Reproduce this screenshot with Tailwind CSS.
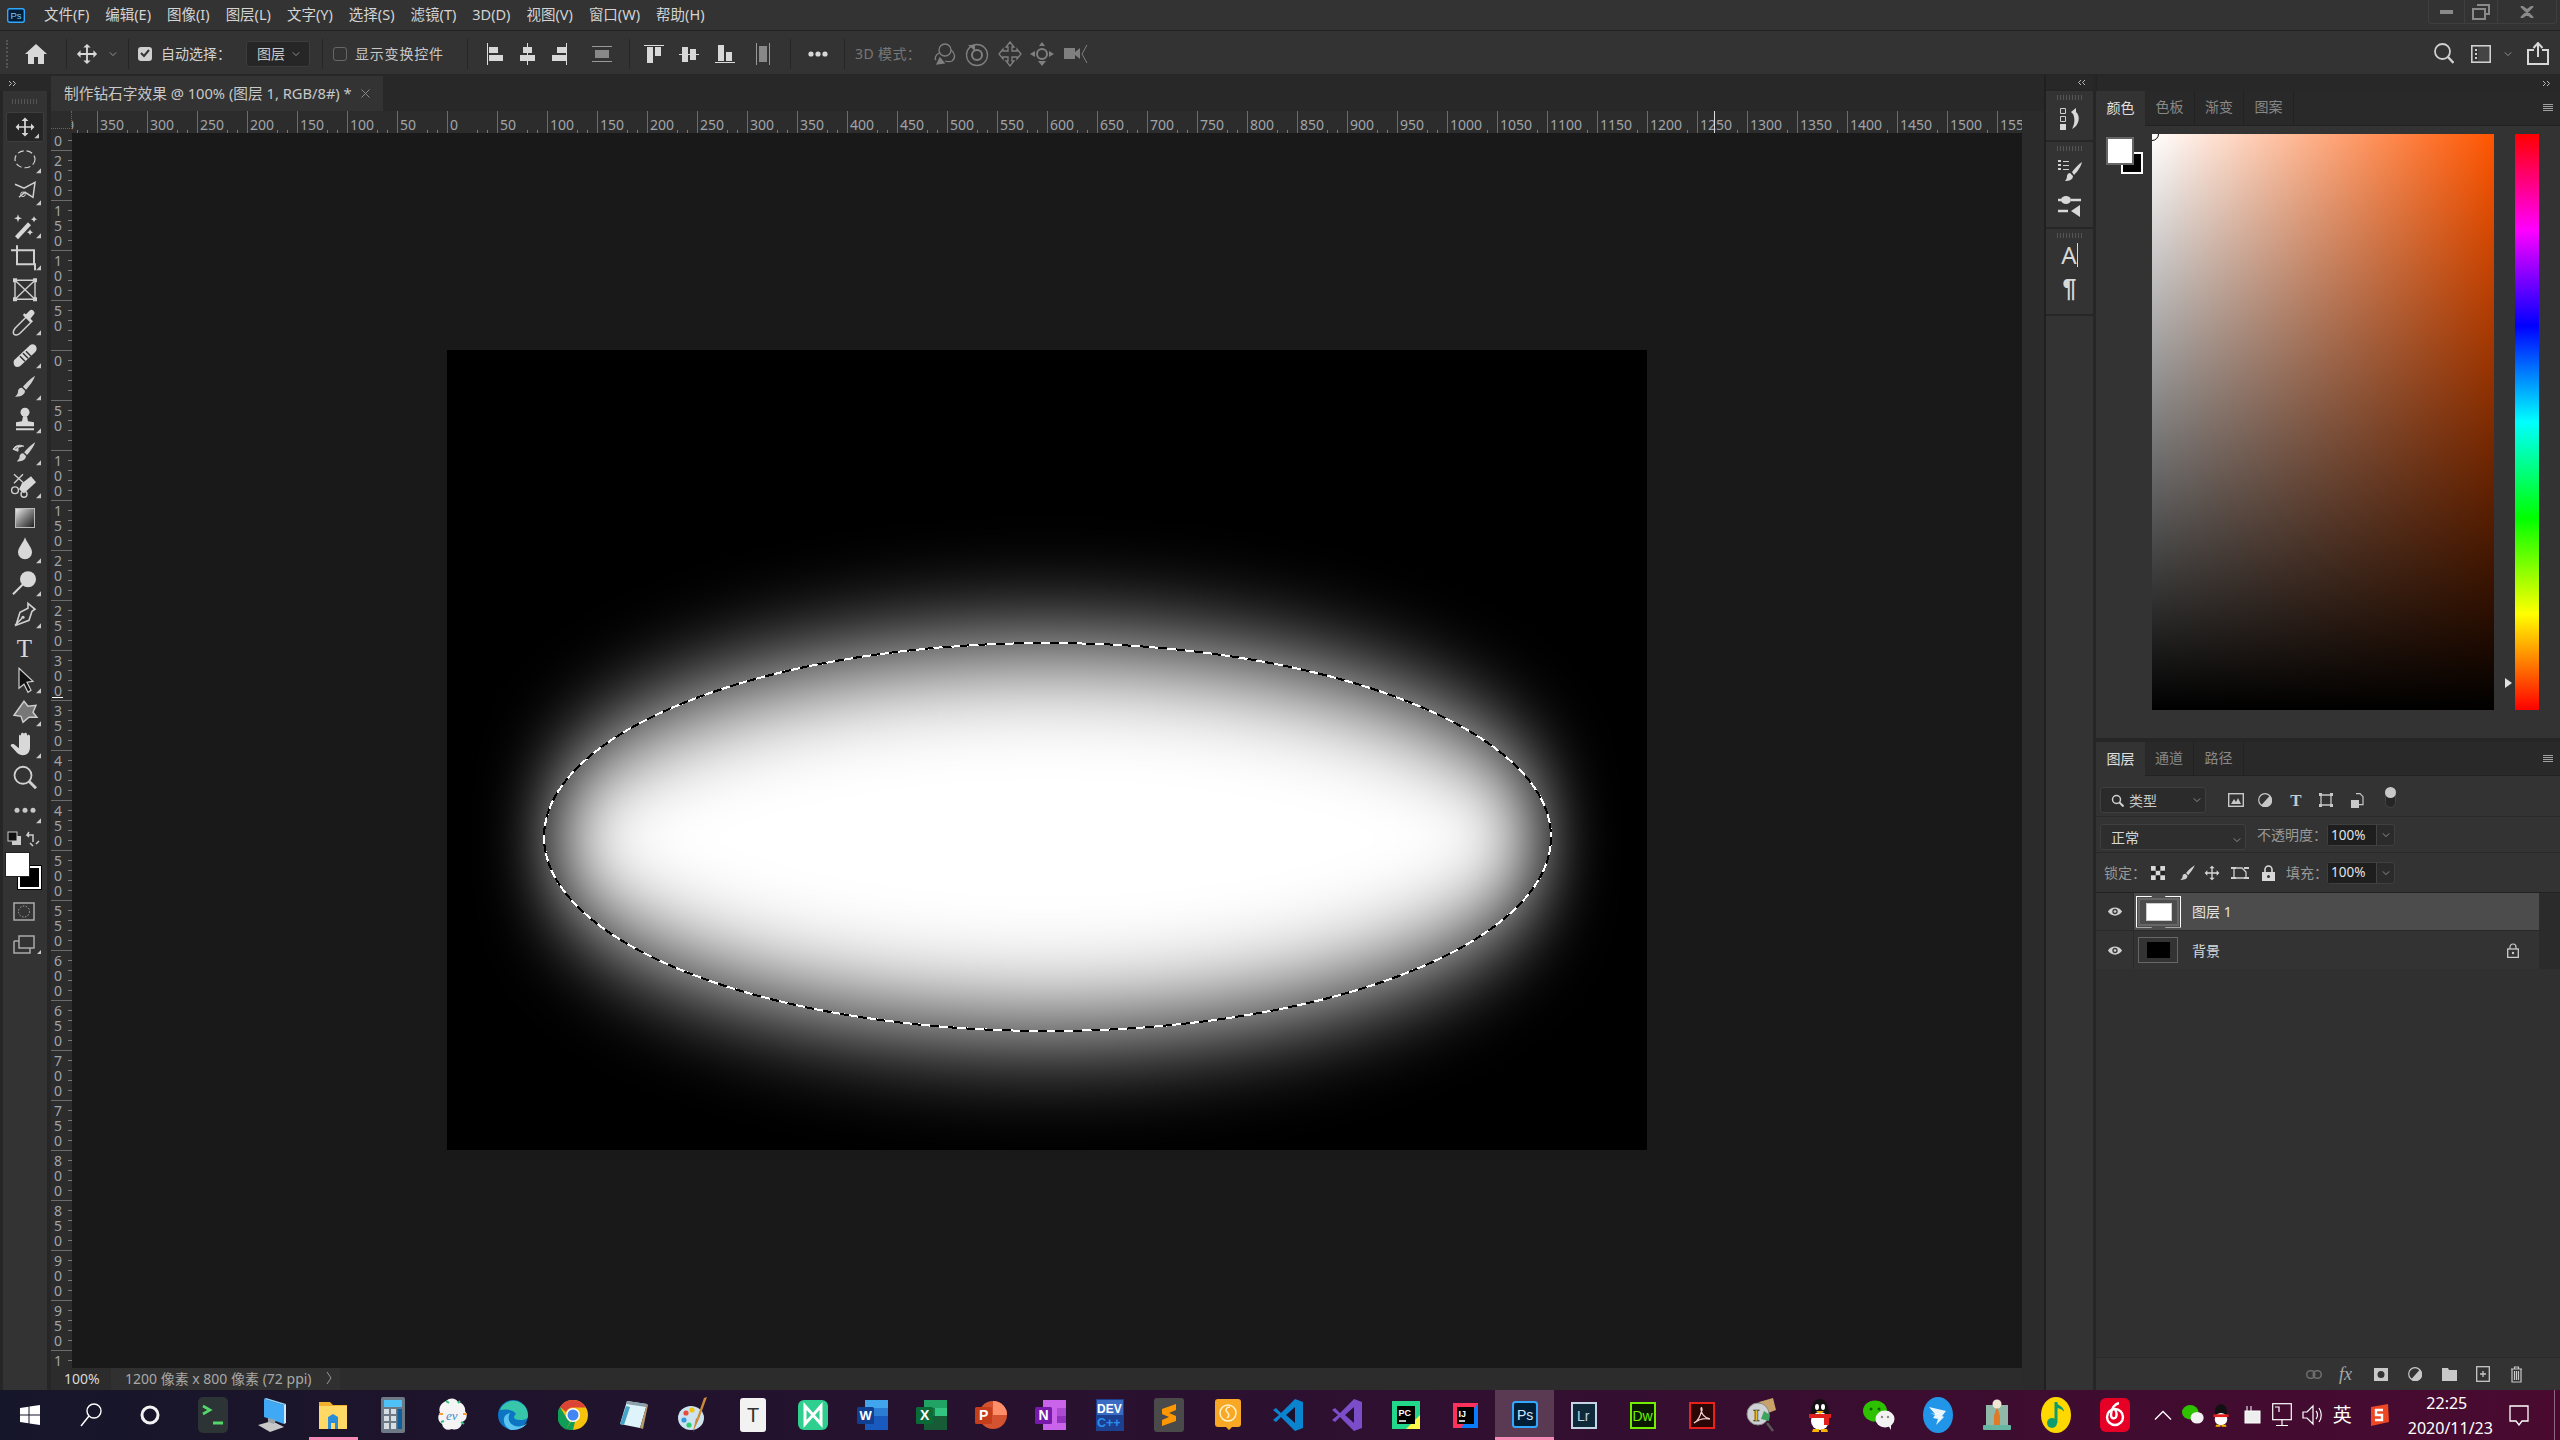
<!DOCTYPE html>
<html lang="zh">
<head>
<meta charset="UTF-8">
<title>Photoshop</title>
<script src="https://cdn.jsdelivr.net/npm/@tailwindcss/browser@4"></script>
</head>
<body class="w-[2560px] h-[1440px] overflow-hidden flex flex-col bg-[#333] text-[#d2d2d2] text-[14px] font-['Noto_Sans','Noto_Sans_CJK_SC',sans-serif]">

<svg class="hidden">
  <defs>
    <symbol id="i-move" viewBox="0 0 24 24"><path d="M12 1l4 4h-3v6h6V8l4 4-4 4v-3h-6v6h3l-4 4-4-4h3v-6H5v3l-4-4 4-4v3h6V5H8z" fill="#d8d8d8"/></symbol>
    <symbol id="i-brush" viewBox="0 0 24 24"><path d="M22 1c-3 2-9 7-12 11l3 3C16 12 21 5 22 1zM9 13c-3 0-4 2-4 4 0 2-1 3-3 5 4 0 10-1 10-6z" fill="#d0d0d0"/></symbol>
    <symbol id="i-chev" viewBox="0 0 10 6"><path d="M1 1l4 4 4-4" fill="none" stroke="#a8a8a8" stroke-width="1"/></symbol>
    <symbol id="i-eye" viewBox="0 0 20 14"><path d="M1 7c4-7 14-7 18 0-4 7-14 7-18 0z" fill="#d0d0d0"/><circle cx="10" cy="7" r="3.4" fill="#3a3a3a"/><circle cx="10" cy="7" r="1.6" fill="#d0d0d0"/></symbol>
    <symbol id="i-menu" viewBox="0 0 10 8"><path d="M0 .5h10M0 2.5h10M0 4.5h10M0 6.5h10" stroke="#a0a0a0" stroke-width="1"/></symbol>
  </defs>
</svg>

<!-- menu bar -->
<header class="h-[31px] shrink-0 flex items-start border-b border-[#222] bg-[#333]">
  <svg class="ml-[7px] mt-[8px] shrink-0" width="18" height="15" viewBox="0 0 18 15"><rect x=".7" y=".7" width="16.6" height="13.6" rx="2" fill="#001e36" stroke="#31a8ff" stroke-width="1.4"/><text x="3.5" y="11" font-size="9.5" fill="#7cc8ff" font-family="Liberation Sans">Ps</text></svg>
  <nav class="ml-[19px] h-[30px] flex items-center gap-[16px] text-[14.5px] text-[#d4d4d4]">
    <span>文件(F)</span><span>编辑(E)</span><span>图像(I)</span><span>图层(L)</span><span>文字(Y)</span><span>选择(S)</span><span>滤镜(T)</span><span>3D(D)</span><span>视图(V)</span><span>窗口(W)</span><span>帮助(H)</span>
  </nav>
  <div class="ml-auto mr-[3px] h-[24px] w-[129px] flex border-l border-b border-r border-[#3f3f3f] rounded-b-[4px]">
    <div class="w-[36px] flex items-center justify-center border-r border-[#3f3f3f]"><div class="w-[13px] h-[4px] bg-[#8a8a8a]"></div></div>
    <div class="w-[33px] flex items-center justify-center border-r border-[#3f3f3f]"><svg width="18" height="16" viewBox="0 0 18 16"><path d="M5 1h12v9h-3M1 5h12v10H1z" fill="none" stroke="#8a8a8a" stroke-width="2"/></svg></div>
    <div class="flex-1 flex items-center justify-center"><svg width="14" height="12" viewBox="0 0 14 12"><path d="M1 0l6 4.5L13 0M1 12l6-4.5 6 4.5M2 1l10 10M12 1L2 11" stroke="#8a8a8a" stroke-width="2.4" fill="none"/></svg></div>
  </div>
</header>

<!-- options bar -->
<section class="h-[44px] shrink-0 flex items-center pt-[2px] bg-[#333] border-b border-[#262626]">
  <div class="ml-[6px] w-[2px] h-[28px] border-l-2 border-dotted border-[#555]"></div>
  <svg class="ml-[17px]" width="22" height="20" viewBox="0 0 22 20"><path d="M11 0l11 10h-3v10h-6v-7H9v7H3V10H0z" fill="#d8d8d8"/></svg>
  <div class="ml-[19px] w-px h-[30px] bg-[#262626]"></div>
  <svg class="ml-[9px]" width="22" height="22"><use href="#i-move"/></svg>
  <svg class="ml-[11px]" width="8" height="6"><use href="#i-chev"/></svg>
  <div class="ml-[11px] w-px h-[30px] bg-[#262626]"></div>
  <div class="ml-[9px] w-[14px] h-[14px] rounded-[3px] bg-[#cfcfcf] flex items-center justify-center"><svg width="10" height="9" viewBox="0 0 10 9"><path d="M1 4l3 3 5-6" fill="none" stroke="#333" stroke-width="2"/></svg></div>
  <span class="ml-[9px] w-[70px] whitespace-nowrap">自动选择：</span>
  <div class="ml-[15px] w-[64px] h-[26px] rounded-[3px] bg-[#262626] border border-[#3c3c3c] flex items-center pl-[10px] text-[#c8c8c8]"><span>图层</span><svg class="ml-[7px]" width="8" height="6"><use href="#i-chev"/></svg></div>
  <div class="ml-[12px] w-px h-[30px] bg-[#262626]"></div>
  <div class="ml-[10px] w-[14px] h-[14px] rounded-[3px] border border-[#666]"></div>
  <span class="ml-[8px] w-[90px] tracking-[.8px] text-[#c8c8c8] whitespace-nowrap">显示变换控件</span>
  <div class="ml-[22px] w-px h-[30px] bg-[#262626]"></div>
  <svg class="ml-[16px]" width="20" height="22" viewBox="0 0 20 22"><path d="M3.5 0v22" stroke="#ddd"/><path d="M5 4h9v6H5zM5 12h14v6H5z" fill="#d8d8d8"/></svg>
  <svg class="ml-[13px]" width="20" height="22" viewBox="0 0 20 22"><path d="M10.5 0v22" stroke="#ddd"/><path d="M6 4h9v6H6zM3 12h15v6H3z" fill="#d8d8d8"/></svg>
  <svg class="ml-[13px]" width="20" height="22" viewBox="0 0 20 22"><path d="M16.5 0v22" stroke="#ddd"/><path d="M7 4h9v6H7zM2 12h14v6H2z" fill="#d8d8d8"/></svg>
  <svg class="ml-[22px]" width="20" height="22" viewBox="0 0 20 22"><path d="M0 3.500h20M0 18.500h20" stroke="#999"/><path d="M3 7h14v8H3z" fill="#888"/></svg>
  <div class="ml-[17px] w-px h-[30px] bg-[#262626]"></div>
  <svg class="ml-[14px]" width="20" height="22" viewBox="0 0 20 22"><path d="M0 2.500h20" stroke="#ddd"/><path d="M3 4h6v16H3zM11 4h6v9h-6z" fill="#d8d8d8"/></svg>
  <svg class="ml-[15px]" width="20" height="22" viewBox="0 0 20 22"><path d="M0 11.500h20" stroke="#ddd"/><path d="M3 4h6v15H3zM11 6h6v11h-6z" fill="#d8d8d8"/></svg>
  <svg class="ml-[16px]" width="20" height="22" viewBox="0 0 20 22"><path d="M0 19.500h20" stroke="#ddd"/><path d="M3 2h6v16H3zM11 9h6v9h-6z" fill="#d8d8d8"/></svg>
  <svg class="ml-[18px]" width="20" height="22" viewBox="0 0 20 22"><path d="M3.500 0v22M16.500 0v22" stroke="#999"/><path d="M6 3h8v16H6z" fill="#888"/></svg>
  <div class="ml-[17px] w-px h-[30px] bg-[#262626]"></div>
  <svg class="ml-[17px]" width="20" height="6" viewBox="0 0 20 6"><circle cx="3" cy="3" r="2.600" fill="#d8d8d8"/><circle cx="10" cy="3" r="2.600" fill="#d8d8d8"/><circle cx="17" cy="3" r="2.600" fill="#d8d8d8"/></svg>
  <div class="ml-[16px] w-px h-[30px] bg-[#262626]"></div>
  <span class="ml-[10px] w-[60px] text-[#777] tracking-[.4px] whitespace-nowrap">3D 模式：</span>
  <svg class="ml-[18px]" width="24" height="24" viewBox="0 0 24 24" fill="none" stroke="#808080" stroke-width="1.300"><circle cx="12" cy="8" r="6"/><path d="M18 8c4 3 5 8 1 11-2 1-4 1-7 0M6 11c-3 2-5 5-3 7"/><path d="M4 22l3-6 4 5z" fill="#808080"/></svg>
  <svg class="ml-[8px]" width="24" height="26" viewBox="0 0 24 26" fill="none" stroke="#808080" stroke-width="1.300"><circle cx="12" cy="14" r="10.500"/><circle cx="12" cy="14" r="5" stroke-width="2"/><path d="M3 4h7v6z" fill="#808080" stroke="none"/></svg>
  <svg class="ml-[9px]" width="24" height="26" viewBox="0 0 24 26"><path d="M12 1l4 5h-2v4h5V8l4 5-4 5v-2h-5v4h2l-4 5-4-5h2v-4H5v2l-4-5 4-5v2h5V6H8z" fill="none" stroke="#808080" stroke-width="1.300"/></svg>
  <svg class="ml-[8px]" width="24" height="24" viewBox="0 0 24 24"><circle cx="12" cy="12" r="5" fill="none" stroke="#808080" stroke-width="2"/><path d="M12 0l3 4H9zM12 24l-4-5h8zM0 12l5-3v6zM24 12l-5 3V9z" fill="#808080"/></svg>
  <svg class="ml-[10px]" width="24" height="20" viewBox="0 0 24 20"><path d="M0 4h11v11H0zM11 8l5-4v11l-5-4z" fill="#808080"/><path d="M23 1l-5 9 5 9" fill="none" stroke="#808080"/></svg>
  <svg class="ml-auto" width="20" height="22" viewBox="0 0 20 22" fill="none" stroke="#d0d0d0" stroke-width="1.800"><circle cx="8.500" cy="8.500" r="7.500"/><path d="M14 14l5.500 6" stroke-width="2.400"/></svg>
  <svg class="ml-[17px]" width="20" height="18" viewBox="0 0 20 18" fill="none"><rect x=".8" y=".8" width="18.400" height="16.400" stroke="#d0d0d0" stroke-width="1.600"/><path d="M5 4v2M5 8v2M5 12v2" stroke="#d0d0d0" stroke-width="2"/><rect x="7" y="2" width="11" height="14" fill="#444"/></svg>
  <svg class="ml-[13px]" width="8" height="6"><use href="#i-chev"/></svg>
  <svg class="ml-[15px] mr-[11px]" width="22" height="23" viewBox="0 0 22 23" fill="none" stroke="#d8d8d8" stroke-width="2"><path d="M7 8H1v14h20V8h-6M11 15V2"/><path d="M6.500 6L11 1l4.500 5" stroke-width="2"/></svg>
</section>

<!-- main -->
<main class="flex-1 min-h-0 flex bg-[#262626]">
  <!-- tool column -->
  <aside class="w-[51px] shrink-0 flex flex-col bg-[#262626]">
    <div class="h-[16px] shrink-0 flex items-center pl-[8px] text-[#bbb] bg-[#282828]">
      <svg width="9" height="7" viewBox="0 0 9 7"><path d="M1 1l2.500 2.500L1 6M5 1l2.500 2.500L5 6" fill="none" stroke="#bbb"/></svg>
    </div>
    <div class="flex-1 ml-[3px] mr-[4px] bg-[#333] flex flex-col">
      <div class="h-[20px] shrink-0 flex items-center justify-center"><div class="w-[26px] h-[5px] bg-[repeating-linear-gradient(90deg,#555_0_1px,transparent_1px_3px)]"></div></div>
      <div class="flex flex-col items-center -ml-[1px]">
        <div class="h-[32.550px] w-[38px] flex items-center justify-center"><svg class="bg-[#262626] rounded-[2px] border border-[#3d3d3d]" width="38" height="30" viewBox="0 0 38 30"><use href="#i-move" x="8" y="4" width="22" height="22"/><path d="M34 22v5h-5z" fill="#c8c8c8"/></svg></div>
        <svg class="h-[32.550px] w-[38px]" viewBox="0 0 38 32"><ellipse cx="19" cy="15" rx="10" ry="8.500" fill="none" stroke="#d0d0d0" stroke-width="1.200" stroke-dasharray="6 3"/><path d="M35 24v5h-5z" fill="#c8c8c8"/></svg>
        <svg class="h-[32.550px] w-[38px]" viewBox="0 0 38 32"><path d="M9 8l9 4 11-6-2 15-8-5-6 5" fill="none" stroke="#d0d0d0" stroke-width="1.500"/><circle cx="17" cy="18" r="2.300" fill="none" stroke="#d0d0d0"/><path d="M35 24v5h-5z" fill="#c8c8c8"/></svg>
        <svg class="h-[32.550px] w-[38px]" viewBox="0 0 38 32"><path d="M9 27l13-14 3 3-13 14z" fill="#d8d8d8"/><path d="M12 5l1 3 3 1-3 1-1 3-1-3-3-1 3-1zM28 7l1 2 2 1-2 1-1 2-1-2-2-1 2-1zM24 20l1 2 2 1-2 1-1 2-1-2-2-1 2-1z" fill="#d8d8d8"/><path d="M35 24v5h-5z" fill="#c8c8c8"/></svg>
        <svg class="h-[32.550px] w-[38px]" viewBox="0 0 38 32"><path d="M5 9h6M11 4v19h18V29M11 9h17v13" fill="none" stroke="#d0d0d0" stroke-width="2"/><path d="M35 24v5h-5z" fill="#c8c8c8"/></svg>
        <svg class="h-[32.550px] w-[38px]" viewBox="0 0 38 32"><path d="M9 6h20v19H9zM9 6l20 19M29 6L9 25" fill="none" stroke="#d0d0d0" stroke-width="1.400"/><path d="M7 4h4v4H7zM27 4h4v4h-4zM7 23h4v4H7zM27 23h4v4h-4z" fill="#d0d0d0"/></svg>
        <svg class="h-[32.550px] w-[38px]" viewBox="0 0 38 32"><path d="M21 10l5 5-12 12c-2 2-5 2-6 1s-1-3 1-6z" fill="none" stroke="#d0d0d0" stroke-width="1.500"/><path d="M20 8l4-4c2-2 6 2 4 4l-4 5 2 2-2 1-7-7 1-2z" fill="#d8d8d8"/><path d="M35 24v5h-5z" fill="#c8c8c8"/></svg>
        <svg class="h-[32.550px] w-[38px]" viewBox="0 0 38 32"><path d="M8 21L24 6c2-2 5-1 6 1s1 4-1 6L14 27c-2 1-4 1-5 0s-2-4-1-6z" fill="#d8d8d8"/><path d="M14 17l5 5M17 14l5 5M20 12l5 5" stroke="#333" stroke-width="1.500"/><path d="M35 24v5h-5z" fill="#c8c8c8"/></svg>
        <svg class="h-[32.550px] w-[38px]" viewBox="0 0 38 32"><use href="#i-brush" x="7" y="3" width="24" height="25"/><path d="M35 24v5h-5z" fill="#c8c8c8"/></svg>
        <svg class="h-[32.550px] w-[38px]" viewBox="0 0 38 32"><circle cx="19" cy="8" r="4.500" fill="#d8d8d8"/><path d="M17 12h4l1 5 6 1v4H10v-4l6-1zM10 24h18v2H10z" fill="#d8d8d8"/><path d="M35 24v5h-5z" fill="#c8c8c8"/></svg>
        <svg class="h-[32.550px] w-[38px]" viewBox="0 0 38 32"><use href="#i-brush" x="9" y="4" width="22" height="24"/><path d="M7 13c2-4 7-5 11-3M7 13l5 2V10z" fill="#d0d0d0" stroke="#d0d0d0"/><path d="M35 24v5h-5z" fill="#c8c8c8"/></svg>
        <svg class="h-[32.550px] w-[38px]" viewBox="0 0 38 32"><path d="M16 14l9-7 5 6-12 11-5-4z" fill="#d8d8d8"/><path d="M8 5l10 9M17 5L8 14" stroke="#d0d0d0" stroke-width="1.400"/><circle cx="9" cy="21" r="3.400" fill="none" stroke="#d0d0d0" stroke-width="1.400"/><circle cx="18" cy="25" r="3" fill="none" stroke="#d0d0d0" stroke-width="1.400"/><path d="M35 24v5h-5z" fill="#c8c8c8"/></svg>
        <div class="h-[32.550px] w-[38px] flex items-center justify-center"><div class="w-[20px] h-[20px] bg-gradient-to-br from-[#e8e8e8] to-[#222] border border-[#bbb]"></div></div>
        <svg class="h-[32.550px] w-[38px]" viewBox="0 0 38 32"><path d="M19 3c2 6 7 10 7 15a7 7 0 0 1-14 0c0-5 5-9 7-15z" fill="#d8d8d8"/><path d="M35 24v5h-5z" fill="#c8c8c8"/></svg>
        <svg class="h-[32.550px] w-[38px]" viewBox="0 0 38 32"><circle cx="22" cy="12" r="8" fill="#d8d8d8"/><path d="M17 17L7 27" stroke="#d8d8d8" stroke-width="2"/><path d="M35 24v5h-5z" fill="#c8c8c8"/></svg>
        <svg class="h-[32.550px] w-[38px]" viewBox="0 0 38 32"><path d="M22 4l7 6-3 2-3 9-13 5 4-13 8-4zM9 26l7-7" fill="none" stroke="#d0d0d0" stroke-width="1.600"/><circle cx="17" cy="18" r="1.600" fill="#d0d0d0"/><path d="M35 24v5h-5z" fill="#c8c8c8"/></svg>
        <div class="h-[32.550px] w-[38px] flex items-center justify-center text-[25px] leading-none text-[#d8d8d8] font-['Liberation_Serif',serif]">T</div>
        <svg class="h-[32.550px] w-[38px]" viewBox="0 0 38 32"><path d="M13 4l14 13-6 1 4 8-3 2-4-8-5 4z" fill="#111" stroke="#d0d0d0" stroke-width="1.200"/><path d="M35 24v5h-5z" fill="#c8c8c8"/></svg>
        <svg class="h-[32.550px] w-[38px]" viewBox="0 0 38 32"><path d="M18 4l4 5 8-1-3 7 4 5-8 0-6 5-2-6-7-1 5-7z" fill="#777" stroke="#d0d0d0" stroke-width="1.400"/><path d="M35 24v5h-5z" fill="#c8c8c8"/></svg>
        <svg class="h-[32.550px] w-[38px]" viewBox="0 0 38 32"><path d="M13 15V7c0-2 2-2 2 0v6-8c0-2 3-2 3 0v8-8c0-2 3-2 3 0v8-6c0-2 3-2 3 0v11c0 5-3 8-7 8-5 0-7-4-12-9-1-2 1-3 3-2l5 4z" fill="#d8d8d8"/><path d="M35 24v5h-5z" fill="#c8c8c8"/></svg>
        <svg class="h-[32.550px] w-[38px]" viewBox="0 0 38 32" fill="none" stroke="#d0d0d0"><circle cx="17" cy="13" r="8.500" stroke-width="1.800"/><path d="M23 19l7 7" stroke-width="3"/></svg>
        <svg class="h-[32.550px] w-[38px]" viewBox="0 0 38 32"><circle cx="11" cy="16" r="2.500" fill="#c8c8c8"/><circle cx="19" cy="16" r="2.500" fill="#c8c8c8"/><circle cx="27" cy="16" r="2.500" fill="#c8c8c8"/><path d="M35 24v5h-5z" fill="#c8c8c8"/></svg>
      </div>
      <svg class="mt-[2px] ml-[3px]" width="36" height="20" viewBox="0 0 36 20"><rect x="6" y="7" width="9" height="9" fill="#ccc"/><rect x="2" y="3" width="9" height="9" fill="#111" stroke="#ccc"/><path d="M23 3l-2 3h6v7M30 15l3-3M27 17l-3-3M23 5h-1M21 6l2 2" fill="none" stroke="#ccc" stroke-width="1.500"/></svg>
      <div class="relative mt-[4px] ml-[3px] h-[36px] w-[36px] shrink-0">
        <div class="absolute left-[12px] top-[13px] w-[23px] h-[23px] bg-black border-2 border-white outline outline-1 outline-black"></div>
        <div class="absolute left-0 top-0 w-[23px] h-[23px] bg-white outline outline-1 outline-[#222]"></div>
      </div>
      <svg class="mt-[11px] ml-[9px]" width="24" height="24" viewBox="0 0 24 24"><rect x="2" y="3" width="20" height="17" fill="none" stroke="#aaa" stroke-width="1.500"/><circle cx="12" cy="11.500" r="5.500" fill="none" stroke="#aaa" stroke-dasharray="1.500 1.500"/></svg>
      <svg class="mt-[8px] ml-[9px]" width="30" height="24" viewBox="0 0 30 24"><path d="M7 4h15v12H7zM2 9h5M2 9v12h16v-5" fill="none" stroke="#aaa" stroke-width="1.500"/><path d="M29 18v4h-4z" fill="#c8c8c8"/></svg>
    </div>
  </aside>

  <!-- document column -->
  <div class="w-[1971px] shrink-0 flex flex-col bg-[#191919]">
    <div class="h-[36px] shrink-0 bg-[#282828] flex pt-px">
      <div class="w-[332px] bg-[#333] flex items-center pl-[13px] text-[14.700px] whitespace-nowrap text-[#c8c8c8]">
        <span>制作钻石字效果 @ 100% (图层 1, RGB/8#) *</span>
        <svg class="ml-[9px]" width="9" height="9" viewBox="0 0 9 9"><path d="M.5.5l8 8M8.500.5l-8 8" stroke="#888"/></svg>
      </div>
    </div>
    <div class="h-[22px] shrink-0 flex bg-[#2c2c2c]">
      <div class="w-[21px] shrink-0 border-r border-b border-dotted border-[#666] h-[18px]"></div>
      <div id="ruler-top" class="relative flex-1 overflow-hidden flex text-[14px] leading-[28px] text-[#a0a5aa]"></div>
    </div>
    <div class="flex-1 min-h-0 flex">
      <div id="ruler-left" class="relative w-[21px] shrink-0 overflow-hidden bg-[#2c2c2c] text-[14px] leading-[15px] text-[#a0a5aa]"></div>
      <div class="flex-1 flex items-center justify-center pb-[2px]">
        <!-- 1200x800 document -->
        <div class="w-[1200px] h-[800px] bg-black shrink-0 overflow-hidden">
          <svg width="1200" height="800" viewBox="0 0 1200 800">
            <defs><filter id="feather" x="-30%" y="-80%" width="160%" height="260%"><feGaussianBlur stdDeviation="34 55"/></filter></defs>
            <ellipse cx="600" cy="488" rx="500" ry="190" fill="#fff" filter="url(#feather)"/>
            <ellipse cx="600.500" cy="487" rx="503.500" ry="194" fill="none" stroke="#fff" stroke-width="2" shape-rendering="crispEdges"/>
            <ellipse cx="600.500" cy="487" rx="503.500" ry="194" fill="none" stroke="#000" stroke-width="2" stroke-dasharray="9 9" shape-rendering="crispEdges"/>
          </svg>
        </div>
      </div>
    </div>
    <div class="h-[22px] shrink-0 flex items-center bg-[#2c2c2c] text-[14px] whitespace-nowrap">
      <div class="w-[60px] h-full bg-[#2c2c2c] flex items-center pl-[13px] pb-[2px] text-[#d8d8d8]">100%</div>
      <div class="w-[229px] h-full bg-[#303030] flex items-center pl-[14px] pb-[2px] text-[#a8a8a8]">1200 像素 x 800 像素 (72 ppi)<svg class="ml-[14px]" width="6" height="14" viewBox="0 0 6 14"><path d="M1 1l4 6-4 6" fill="none" stroke="#999"/></svg></div>
    </div>
  </div>

  <!-- scroll track -->
  <div class="w-[22px] shrink-0 flex flex-col bg-[#2b2b2b]"><div class="h-[36px] bg-[#282828]"></div></div>
  <div class="w-[2px] shrink-0 bg-[#202020]"></div>

  <!-- dock icons -->
  <div class="w-[47px] shrink-0 flex flex-col gap-[2px] bg-[#262626]">
    <div class="h-[14px] flex items-center justify-end pr-[7px] bg-[#282828]"><svg width="9" height="7" viewBox="0 0 9 7"><path d="M4 1L1.500 3.500 4 6M8 1L5.500 3.500 8 6" fill="none" stroke="#bbb"/></svg></div>
    <div class="h-[49px] bg-[#333] flex flex-col items-center pt-[4px]">
      <div class="w-[26px] h-[5px] bg-[repeating-linear-gradient(90deg,#555_0_1px,transparent_1px_3px)]"></div>
      <svg class="mt-[7px]" width="22" height="24" viewBox="0 0 22 24"><path d="M1.500 1.500h5v5h-5zM1.500 9.500h5v5h-5z" fill="none" stroke="#d0d0d0"/><path d="M1 17h6v6H1z" fill="#d8d8d8"/><path d="M12 5l5-4v4c5 4 3 14-4 17 3-5 3-11 1-15z" fill="#d8d8d8"/></svg>
    </div>
    <div class="h-[85px] bg-[#333] flex flex-col items-center pt-[4px]">
      <div class="w-[26px] h-[5px] bg-[repeating-linear-gradient(90deg,#555_0_1px,transparent_1px_3px)]"></div>
      <svg class="mt-[8px]" width="26" height="24" viewBox="0 0 26 24"><path d="M1 1h3v2H1zM1 5h3v2H1zM1 9h3v2H1zM6 2h6v1H6zM6 6h6v1H6zM6 10h6v1H6z" fill="#d0d0d0"/><path d="M25 3c-3 2-7 6-10 10l2 3c3-3 7-8 8-13zM13 14c-2 0-3 2-3 3 0 2-1 4-2 5 4 0 8-1 8-5z" fill="#d8d8d8"/></svg>
      <svg class="mt-[12px]" width="26" height="24" viewBox="0 0 26 24"><path d="M1 5h5M14 5h10M1 16h10" stroke="#d8d8d8" stroke-width="2.400"/><ellipse cx="9" cy="5" rx="5" ry="4" fill="#d8d8d8"/><path d="M14 16l9-6v12z" fill="#d8d8d8"/></svg>
    </div>
    <div class="h-[85px] bg-[#333] flex flex-col items-center pt-[4px]">
      <div class="w-[26px] h-[5px] bg-[repeating-linear-gradient(90deg,#555_0_1px,transparent_1px_3px)]"></div>
      <div class="mt-[2px] flex items-center text-[24px] leading-[30px] text-[#d8d8d8]"><span>A</span><div class="w-px h-[24px] bg-[#d8d8d8]"></div></div>
      <div class="mt-[3px] text-[25px] leading-[30px] text-[#d8d8d8] font-bold font-['Liberation_Sans',sans-serif]">¶</div>
    </div>
    <div class="flex-1 bg-[#333]"></div>
  </div>
  <div class="w-[3px] shrink-0 bg-[#262626]"></div>

  <!-- right panels -->
  <div class="w-[464px] shrink-0 flex flex-col bg-[#262626]">
    <div class="h-[16px] shrink-0 flex items-center justify-end pr-[9px] bg-[#282828] border-l border-[#222]"><svg width="9" height="7" viewBox="0 0 9 7"><path d="M1 1l2.500 2.500L1 6M5 1l2.500 2.500L5 6" fill="none" stroke="#bbb"/></svg></div>

    <!-- colour panel -->
    <section class="h-[647px] shrink-0 flex flex-col bg-[#333]">
      <div class="h-[35px] shrink-0 flex bg-[#292929] text-[14px] text-[#888] border-b border-[#222]">
        <div class="w-[49px] -mb-px bg-[#333] flex items-center justify-center pb-[3px] text-[#e0e0e0]">颜色</div>
        <div class="w-[50px] flex items-center justify-center pb-[3px] border-r border-[#222]">色板</div>
        <div class="w-[49px] flex items-center justify-center pb-[3px] border-r border-[#222]">渐变</div>
        <div class="w-[50px] flex items-center justify-center pb-[3px] border-r border-[#222]">图案</div>
        <svg class="ml-auto mr-[7px] mt-[13px]" width="10" height="8"><use href="#i-menu"/></svg>
      </div>
      <div class="flex-1 flex pt-[8px]">
        <div class="relative ml-[10px] mt-[3px] w-[37px] h-[38px] shrink-0">
          <div class="absolute left-[15px] top-[15px] w-[22px] h-[22px] bg-black border-2 border-white"></div>
          <div class="absolute left-0 top-0 w-[28px] h-[28px] bg-white border-2 border-[#666]"></div>
        </div>
        <div class="relative ml-[9px] w-[342px] h-[576px] shrink-0 overflow-hidden bg-[linear-gradient(to_top,#000,transparent),linear-gradient(to_right,#fff,#ff5500)]">
          <div class="absolute -left-[7px] -top-[7px] w-[14px] h-[14px] rounded-full border border-black"></div>
        </div>
        <div class="ml-[11px] w-[8px] shrink-0 pt-[544px]"><svg width="7" height="10" viewBox="0 0 7 10"><path d="M0 0l7 5-7 5z" fill="#e0e0e0"/></svg></div>
        <div class="ml-[2px] w-[24px] h-[576px] shrink-0 bg-[linear-gradient(to_bottom,#f00,#f0f,#00f,#0ff,#0f0,#ff0,#f00)]"></div>
      </div>
    </section>
    <div class="h-[4px] shrink-0 bg-[#262626]"></div>

    <!-- layers panel -->
    <section class="flex-1 min-h-0 flex flex-col bg-[#333]">
      <div class="h-[34px] shrink-0 flex bg-[#292929] text-[14px] text-[#888] border-b border-[#222]">
        <div class="w-[49px] -mb-px bg-[#333] flex items-center justify-center pb-[2px] text-[#e0e0e0]">图层</div>
        <div class="w-[49px] flex items-center justify-center pb-[2px] border-r border-[#222]">通道</div>
        <div class="w-[50px] flex items-center justify-center pb-[2px] border-r border-[#222]">路径</div>
        <svg class="ml-auto mr-[7px] mt-[13px]" width="10" height="8"><use href="#i-menu"/></svg>
      </div>
      <div class="h-[41px] shrink-0 flex items-center border-b border-[#292929] pt-[8px]">
        <div class="ml-[4px] w-[106px] h-[26px] rounded-[3px] bg-[#2b2b2b] border border-[#3f3f3f] flex items-center pl-[10px]">
          <svg width="13" height="13" viewBox="0 0 13 13" fill="none" stroke="#d0d0d0" stroke-width="1.500"><circle cx="5.500" cy="5.500" r="4"/><path d="M8.500 8.500l4 4" stroke-width="2"/></svg>
          <span class="ml-[5px] text-[#c8c8c8]">类型</span>
          <svg class="ml-auto mr-[4px]" width="8" height="6"><use href="#i-chev"/></svg>
        </div>
        <svg class="ml-[22px]" width="16" height="14" viewBox="0 0 16 14"><rect x=".7" y=".7" width="14.600" height="12.600" fill="none" stroke="#c8c8c8" stroke-width="1.400"/><path d="M3 11l3-5 2 3 2-4 3 6z" fill="#c8c8c8"/></svg>
        <svg class="ml-[14px]" width="14" height="14" viewBox="0 0 14 14"><circle cx="7" cy="7" r="6.300" fill="none" stroke="#c8c8c8" stroke-width="1.200"/><path d="M12 2.500A6.500 6.500 0 0 1 3 12.500z" fill="#c8c8c8"/></svg>
        <div class="ml-[15px] w-[18px] text-center text-[17px] leading-none font-bold text-[#c8c8c8] font-['Liberation_Serif',serif]">T</div>
        <svg class="ml-[14px]" width="14" height="14" viewBox="0 0 14 14"><path d="M2 2h10v10H2z" fill="none" stroke="#c8c8c8" stroke-width="1.300"/><path d="M0 0h3v3H0zM11 0h3v3h-3zM0 11h3v3H0zM11 11h3v3h-3z" fill="#c8c8c8"/></svg>
        <svg class="ml-[17px]" width="14" height="15" viewBox="0 0 14 15"><path d="M6 .7h4l3 3v8H9" fill="none" stroke="#c8c8c8" stroke-width="1.200"/><path d="M1 7h8v8H1z" fill="#c8c8c8"/></svg>
        <div class="ml-[20.500px] -mt-[6px] w-[11px] h-[21px] rounded-full bg-[#262626] border border-[#444]"><div class="-ml-px -mt-px w-[11px] h-[11px] rounded-full bg-[#c8c8c8]"></div></div>
      </div>
      <div class="h-[36px] shrink-0 flex items-center border-b border-[#292929] pt-[5px]">
        <div class="ml-[4px] w-[146px] h-[26px] rounded-[3px] bg-[#2e2e2e] border border-[#3f3f3f] flex items-center pl-[10px]">
          <span class="text-[#d8d8d8]">正常</span>
          <svg class="ml-auto mr-[4px] mt-[6px]" width="8" height="6"><use href="#i-chev"/></svg>
        </div>
        <span class="ml-[11px] -mt-[6px] w-[70px] text-[#999] whitespace-nowrap">不透明度：</span>
        <div class="w-[68px] h-[22px] -mt-[4px] rounded-[3px] bg-[#2b2b2b] border border-[#3f3f3f] flex items-center">
          <div class="w-[48px] h-full bg-[#1e1e1e] flex items-center pl-[3px] text-[13.500px] text-[#dfe4ea]">100%</div>
          <div class="flex-1 h-full flex items-center justify-center border-l border-[#444]"><svg width="8" height="6"><use href="#i-chev"/></svg></div>
        </div>
      </div>
      <div class="h-[40px] shrink-0 flex items-center border-b border-[#222]">
        <span class="ml-[8px] w-[46px] text-[#999] shrink-0 whitespace-nowrap">锁定：</span>
        <svg width="14" height="14" viewBox="0 0 14 14" class="ml-[1px]"><path d="M0 0h14v14H0z" fill="#d8d8d8"/><path d="M4.700 0h4.600v4.700H4.700zM0 4.700h4.700v4.600H0zM9.300 4.700H14v4.600H9.300zM4.700 9.300h4.600V14H4.700z" fill="#222"/></svg>
        <svg class="ml-[13.500px]" width="17" height="18"><use href="#i-brush"/></svg>
        <svg class="ml-[8.500px]" width="16" height="16"><use href="#i-move"/></svg>
        <svg class="ml-[11px]" width="18" height="16" viewBox="0 0 18 16"><path d="M3 3h8l4 4v6H3z" fill="none" stroke="#d0d0d0" stroke-width="1.300"/><path d="M0 2h5v2H0zM13 2h5v2h-5zM0 12h5v2H0zM13 12h5v2h-5z" fill="#d0d0d0"/></svg>
        <svg class="ml-[12.500px]" width="13" height="16" viewBox="0 0 13 16"><path d="M3 7V4.500a3.500 3.500 0 0 1 7 0V7" fill="none" stroke="#d8d8d8" stroke-width="1.600"/><path d="M0 7h13v9H0z" fill="#d8d8d8"/><circle cx="6.500" cy="11.500" r="1.500" fill="#333"/></svg>
        <span class="ml-[11.500px] w-[41px] text-[#999] shrink-0 whitespace-nowrap">填充：</span>
        <div class="w-[68px] h-[22px] rounded-[3px] bg-[#2b2b2b] border border-[#3f3f3f] flex items-center shrink-0">
          <div class="w-[48px] h-full bg-[#1e1e1e] flex items-center pl-[3px] text-[13.500px] text-[#dfe4ea]">100%</div>
          <div class="flex-1 h-full flex items-center justify-center border-l border-[#444]"><svg width="8" height="6"><use href="#i-chev"/></svg></div>
        </div>
      </div>
      <!-- layers list -->
      <div class="flex-1 flex flex-col">
        <div class="h-[37px] shrink-0 flex bg-[#2b2b2b]">
          <div class="w-[38px] bg-[#333] flex items-center justify-center border-r border-[#2a2a2a]"><svg width="16" height="11"><use href="#i-eye"/></svg></div>
          <div class="w-[405px] bg-[#4c4c4c] flex items-center pl-[2px]">
            <div class="relative w-[45px] h-[32px] shrink-0 flex items-center justify-center">
              <div class="absolute inset-0 border-[1.500px] border-white [clip-path:polygon(0_0,35%_0,35%_100%,65%_100%,65%_0,100%_0,100%_100%,0_100%)]"></div>
              <div class="w-[41px] h-[28px] border-2 border-[#666] flex items-center justify-center"><div class="w-[24px] h-[16px] bg-white shadow-[0_0_0_1px_#ccc]"></div></div>
            </div>
            <span class="ml-[11px] text-[#e4e4e4]">图层 1</span>
          </div>
        </div>
        <div class="h-[39px] shrink-0 flex bg-[#2b2b2b] border-t border-[#2a2a2a]">
          <div class="w-[38px] bg-[#333] flex items-center justify-center border-r border-[#2a2a2a]"><svg width="16" height="11"><use href="#i-eye"/></svg></div>
          <div class="w-[405px] bg-[#333] flex items-center pl-[4px]">
            <div class="w-[40px] h-[26px] border border-[#666] flex items-center justify-center"><div class="w-[23px] h-[16px] bg-black"></div></div>
            <span class="ml-[14px] text-[#d8d8d8]">背景</span>
            <svg class="ml-auto mr-[20px]" width="12" height="15" viewBox="0 0 12 15"><path d="M3 6V4a3 3 0 0 1 6 0v2" fill="none" stroke="#ccc" stroke-width="1.200"/><rect x=".7" y="6" width="10.600" height="8.400" fill="none" stroke="#ccc" stroke-width="1.300"/><circle cx="6" cy="10" r="1.200" fill="#ccc"/></svg>
          </div>
        </div>
        <div class="flex-1 bg-[#303030]"></div>
      </div>
      <!-- footer -->
      <div class="h-[33px] shrink-0 border-t border-[#292929] bg-[#333] flex items-center">
        <svg class="ml-[210px]" width="16" height="9" viewBox="0 0 16 9" fill="none" stroke="#6e6e6e" stroke-width="1.500"><rect x=".8" y=".8" width="8" height="7.400" rx="3.500"/><rect x="7.200" y=".8" width="8" height="7.400" rx="3.500"/></svg>
        <span class="ml-[17px] w-[18px] italic text-[18px] leading-none text-[#aaa] font-['Liberation_Serif',serif]">fx</span>
        <svg class="ml-[17px]" width="14" height="13" viewBox="0 0 14 13"><path fill-rule="evenodd" d="M0 0h14v13H0zM7 3a3.500 3.500 0 1 0 0 7 3.500 3.500 0 0 0 0-7z" fill="#c8c8c8"/></svg>
        <svg class="ml-[20px]" width="14" height="14" viewBox="0 0 14 14"><circle cx="7" cy="7" r="6.300" fill="none" stroke="#c8c8c8" stroke-width="1.200"/><path d="M12 2.500A6.500 6.500 0 0 1 3 12.500z" fill="#c8c8c8"/></svg>
        <svg class="ml-[19.500px]" width="15" height="13" viewBox="0 0 15 13"><path d="M0 0h6l1 2h8v11H0z" fill="#c8c8c8"/></svg>
        <svg class="ml-[19.500px]" width="14" height="16" viewBox="0 0 14 16"><rect x=".7" y=".7" width="12.600" height="14.600" fill="none" stroke="#c8c8c8" stroke-width="1.300"/><path d="M7 5v6M4 8h6" stroke="#c8c8c8" stroke-width="1.300"/></svg>
        <svg class="ml-[19.500px]" width="13" height="17" viewBox="0 0 13 17" fill="none" stroke="#c8c8c8" stroke-width="1.200"><path d="M1 3h11M4.500 3V1h4v2M2 3v13h9V3M4.500 5v9M6.500 5v9M8.500 5v9"/></svg>
      </div>
    </section>
  </div>
</main>

<!-- taskbar -->
<footer class="h-[50px] shrink-0 flex items-center bg-[linear-gradient(to_right,#16162a,#2c1030_50%,#4a0a30)]">
  <svg class="ml-[20px] shrink-0" width="20" height="20" viewBox="0 0 20 20"><path d="M0 3l8.500-1.300V9.500H0zM9.500 1.500L20 0v9.500H9.500zM0 10.500h8.500v7.800L0 17zM9.500 10.500H20V20L9.500 18.500z" fill="#fff"/></svg>
  <svg class="ml-[40px] shrink-0" width="22" height="24" viewBox="0 0 22 24" fill="none" stroke="#fff"><circle cx="14" cy="8" r="7" stroke-width="1.400"/><path d="M9 13L1 23" stroke-width="1.500"/></svg>
  <svg class="ml-[38px] shrink-0" width="20" height="20" viewBox="0 0 20 20"><circle cx="10" cy="10" r="8" fill="none" stroke="#f2f2f2" stroke-width="3"/></svg>

  <div class="ml-[23px] flex shrink-0">
    <!-- terminal -->
    <div class="relative w-[60px] h-[50px] flex items-center justify-center"><svg width="30" height="36" viewBox="0 0 30 36"><rect width="30" height="36" rx="5" fill="#2d3436"/><path d="M5 9l7 4-7 4" fill="none" stroke="#53d769" stroke-width="2.600"/><path d="M15 26h10" stroke="#53d769" stroke-width="3"/></svg></div>
    <!-- this pc -->
    <div class="w-[60px] h-[50px] flex items-center justify-center"><svg width="34" height="36" viewBox="0 0 34 36"><path d="M8 2l20 6v19L8 20z" fill="#3fa9f5"/><path d="M8 2l2-1 20 6-2 1z" fill="#8fd3ff"/><path d="M28 8l2-1v19l-2 1z" fill="#cfe8f8"/><path d="M2 28l14-4 12 6-14 5z" fill="#c8c8c8"/><path d="M12 21l8 2-2 4-6-2z" fill="#9ba3a9"/></svg></div>
    <!-- explorer -->
    <div class="w-[60px] h-[50px] flex flex-col items-center"><svg class="mt-[12px]" width="28" height="27" viewBox="0 0 28 27"><path d="M0 0h11l3 3h14v24H0z" fill="#f2b12d"/><path d="M0 4h28v23H0z" fill="#ffd866"/><path d="M9 15l5-3 5 3v12H9z" fill="#2a8dd8"/><path d="M12 21h4v6h-4z" fill="#ffd866"/></svg><div class="w-[49px] h-[3px] mt-auto bg-[#f58ab5]"></div></div>
    <!-- calc -->
    <div class="w-[60px] h-[50px] flex items-center justify-center"><svg width="24" height="36" viewBox="0 0 24 36"><rect width="24" height="36" rx="2" fill="#6d7a85"/><rect x="3" y="3" width="18" height="7" fill="#4fc3f7"/><path d="M3 12h5v5H3zM10 12h5v5h-5zM3 19h5v5H3zM10 19h5v5h-5zM3 26h5v6H3zM10 26h5v6h-5z" fill="#d6dee4"/><path d="M16.500 12H21v20h-4.500z" fill="#0f5f9e"/></svg></div>
    <!-- fan app -->
    <div class="w-[60px] h-[50px] flex items-center justify-center"><svg width="30" height="34" viewBox="0 0 30 34"><path d="M8 3c4-4 10-3 12 1 4 0 8 5 7 9 3 4 2 9-3 11 0 5-5 9-10 7-5 2-9 0-10-5-4-2-5-8-2-11-2-5 1-10 6-12z" fill="#f4f4f4"/><path d="M8 3l3 2M22 3l-2 2M3 24l3-1M26 26l-3-2" stroke="#2ec27e" stroke-width="2"/><path d="M1 16h4M25 16h4" stroke="#f39c3d" stroke-width="2"/><text x="8" y="22" font-size="13" font-style="italic" fill="#3a8dd0" font-family="Liberation Serif">ev</text></svg></div>
    <!-- edge -->
    <div class="w-[60px] h-[50px] flex items-center justify-center"><svg width="30" height="30" viewBox="0 0 30 30"><circle cx="15" cy="15" r="15" fill="#0c74c2"/><path d="M2 10C5 2 15-2 23 3c5 3 7 8 7 13 0 3-3 4-8 4-4 0-6-1-6-3 0-1 1-2 2-3-3-5-11-5-16-4z" fill="#37c6a9"/><path d="M15 30c-6 0-10-6-9-12 1-3 3-4 6-5-3 5-1 11 5 13 4 1 9 0 12-3-2 4-8 7-14 7z" fill="#5bc4f1"/></svg></div>
    <!-- chrome -->
    <div class="w-[60px] h-[50px] flex items-center justify-center"><svg width="30" height="30" viewBox="0 0 30 30"><circle cx="15" cy="15" r="15" fill="#f4c20d"/><path d="M15 0a15 15 0 0 1 13 7.500H15a7.500 7.500 0 0 0-7 4.500L2 7a15 15 0 0 1 13-7z" fill="#db4437"/><path d="M2 7l6 10 4 5.500-4 7A15 15 0 0 1 2 7z" fill="#0f9d58"/><path d="M15 30l-7-.5 5-8h4l-2 8.500z" fill="#0f9d58"/><circle cx="15" cy="15" r="7" fill="#fff"/><circle cx="15" cy="15" r="5.500" fill="#4285f4"/></svg></div>
    <!-- notepad -->
    <div class="w-[60px] h-[50px] flex items-center justify-center"><svg width="30" height="30" viewBox="0 0 30 30"><path d="M9 1l20 3-7 24-20-4z" fill="#dff3fb"/><path d="M9 1l20 3-1 3L8 4z" fill="#8aa0aa"/><path d="M22 28l7-24 1 1-5 24z" fill="#b59a6d"/><path d="M2 24l6-18 4 1-6 18z" fill="#46a5c6"/></svg></div>
    <!-- paint -->
    <div class="w-[60px] h-[50px] flex items-center justify-center"><svg width="30" height="36" viewBox="0 0 30 36"><ellipse cx="13" cy="21" rx="13" ry="12" fill="#cde3ef"/><circle cx="8" cy="16" r="2.600" fill="#e74c3c"/><circle cx="14" cy="13" r="2.600" fill="#f1c40f"/><circle cx="6" cy="23" r="2.600" fill="#3498db"/><circle cx="11" cy="28" r="2.600" fill="#2ecc71"/><path d="M29 0l-3 1-7 20 2 1zM21 22l-3-1-3 14z" fill="#c98a3a"/></svg></div>
    <!-- T -->
    <div class="w-[60px] h-[50px] flex items-center justify-center"><div class="w-[26px] h-[34px] rounded-[3px] bg-[#f2f2f2] flex items-center justify-center text-[#333] text-[20px] font-['Liberation_Sans',sans-serif]">T</div></div>
    <!-- navicat -->
    <div class="w-[60px] h-[50px] flex items-center justify-center"><svg width="30" height="30" viewBox="0 0 30 30"><rect width="30" height="30" rx="6" fill="#2ecf8f"/><path d="M7 6v18l8-9 8 9V6l-8 9z" fill="none" stroke="#fff" stroke-width="3"/></svg></div>
    <!-- word -->
    <div class="w-[59.300px] h-[50px] flex items-center justify-center"><svg width="32" height="32" viewBox="0 0 32 32"><path d="M8 1h23v30H8z" fill="#185abd"/><path d="M8 1h23v8H8z" fill="#41a5ee"/><path d="M8 9h23v8H8z" fill="#2b7cd3"/><rect y="8" width="17" height="17" rx="1.500" fill="#103f91"/><text x="2.500" y="21" font-size="13" font-weight="700" fill="#fff" font-family="Liberation Sans">W</text></svg></div>
    <!-- excel -->
    <div class="w-[59.300px] h-[50px] flex items-center justify-center"><svg width="32" height="32" viewBox="0 0 32 32"><path d="M8 1h23v30H8z" fill="#185c37"/><path d="M8 1h23v8H8z" fill="#21a366"/><path d="M19 9h12v8H19z" fill="#33c481"/><path d="M8 9h11v8H8z" fill="#107c41"/><rect y="8" width="17" height="17" rx="1.500" fill="#0b6a38"/><text x="4" y="21" font-size="14" font-weight="700" fill="#fff" font-family="Liberation Sans">X</text></svg></div>
    <!-- ppt -->
    <div class="w-[59.300px] h-[50px] flex items-center justify-center"><svg width="32" height="32" viewBox="0 0 32 32"><circle cx="18" cy="16" r="14" fill="#d35230"/><path d="M18 2a14 14 0 0 1 14 14H18z" fill="#ff8f6b"/><rect y="8" width="17" height="17" rx="1.500" fill="#c43e1c"/><text x="4" y="21" font-size="14" font-weight="700" fill="#fff" font-family="Liberation Sans">P</text></svg></div>
    <!-- onenote -->
    <div class="w-[59.300px] h-[50px] flex items-center justify-center"><svg width="32" height="32" viewBox="0 0 32 32"><path d="M8 1h23v30H8z" fill="#ca64ea"/><path d="M22 9h9v8h-9z" fill="#ae4bd5"/><path d="M22 17h9v7h-9z" fill="#9332bf"/><rect y="8" width="17" height="17" rx="1.500" fill="#7719aa"/><text x="3.500" y="21" font-size="14" font-weight="700" fill="#fff" font-family="Liberation Sans">N</text></svg></div>
    <!-- dev c++ -->
    <div class="w-[59.300px] h-[50px] flex items-center justify-center"><svg width="28" height="32" viewBox="0 0 28 32"><rect width="28" height="32" fill="#1d3f8f"/><path d="M1 1h26v15H1z" fill="#3a6cc4"/><text x="1" y="14" font-size="12" font-weight="700" fill="#fff" font-family="Liberation Sans">DEV</text><text x="1" y="28" font-size="12.500" font-weight="700" fill="#2a8ff0" font-family="Liberation Sans">C++</text></svg></div>
    <!-- sublime -->
    <div class="w-[59.300px] h-[50px] flex items-center justify-center"><svg width="30" height="34" viewBox="0 0 30 34"><rect width="30" height="34" rx="3" fill="#4a4a4a"/><path d="M8 11l14-5v6l-7 3 7 3v5L8 28v-6l7-3-7-3z" fill="#ff9800"/></svg></div>
    <!-- bracket-ish -->
    <div class="w-[59.300px] h-[50px] flex items-center justify-center"><svg width="26" height="32" viewBox="0 0 26 32"><path d="M3 0h20c2 0 3 1 3 3v22c0 2-1 3-3 3h-6l-3 3-3-3H3c-2 0-3-1-3-3V3c0-2 1-3 3-3z" fill="#f9a825"/><circle cx="13" cy="14" r="8" fill="none" stroke="#fff3cd" stroke-width="1.500"/><path d="M15 8c-4 0-5 3-3 5s3 4 0 6" fill="none" stroke="#fff3cd" stroke-width="1.500"/></svg></div>
    <!-- vs code -->
    <div class="w-[59.300px] h-[50px] flex items-center justify-center"><svg width="30" height="32" viewBox="0 0 30 32"><path d="M22 0l8 3v26l-8 3L8 18l-5 5-3-2 6-5-6-5 3-2 5 5z" fill="#0a84cf"/><path d="M22 8L13 16l9 8z" fill="#1a1030"/></svg></div>
    <!-- vs -->
    <div class="w-[59.300px] h-[50px] flex items-center justify-center"><svg width="30" height="32" viewBox="0 0 30 32"><path d="M22 0l8 3v26l-8 3L8 18l-5 5-3-2 6-5-6-5 3-2 5 5z" fill="#7c4dc8"/><path d="M22 8L13 16l9 8z" fill="#2a1030"/></svg></div>
    <!-- pycharm -->
    <div class="w-[59.300px] h-[50px] flex items-center justify-center"><svg width="28" height="28" viewBox="0 0 28 28"><rect width="28" height="28" fill="#21d789"/><path d="M14 28h14V14z" fill="#fcf84a"/><rect x="5" y="5" width="18" height="18" fill="#000"/><text x="6.500" y="15" font-size="9" font-weight="700" fill="#fff" font-family="Liberation Sans">PC</text><path d="M7 20h7" stroke="#fff" stroke-width="1.500"/></svg></div>
    <!-- idea -->
    <div class="w-[59.300px] h-[50px] flex items-center justify-center"><svg width="25" height="25" viewBox="0 0 25 25"><rect width="25" height="25" fill="#fe315d"/><path d="M25 0v25H8z" fill="#087cfa"/><rect x="4" y="4" width="17" height="17" fill="#000"/><text x="5.500" y="13.500" font-size="9" font-weight="700" fill="#fff" font-family="Liberation Sans">IJ</text><path d="M6 18h6" stroke="#fff" stroke-width="1.500"/></svg></div>
    <!-- ps active -->
    <div class="w-[59px] h-[50px] flex flex-col items-center bg-[#5a3a52]"><svg class="mt-[11px]" width="26" height="27" viewBox="0 0 26 27"><rect x="1" y="1" width="24" height="25" rx="2.500" fill="#001e36" stroke="#31a8ff" stroke-width="2"/><text x="5" y="19" font-size="14" fill="#cfe8ff" font-family="Liberation Sans">Ps</text></svg><div class="w-full h-[3px] mt-auto bg-[#f58ab5]"></div></div>
    <!-- lr -->
    <div class="w-[59px] h-[50px] flex items-center justify-center"><svg width="26" height="27" viewBox="0 0 26 27"><rect x="1" y="1" width="24" height="25" fill="#0e2a3a" stroke="#c4d5e8" stroke-width="2"/><text x="6" y="19" font-size="14" fill="#c4d5e8" font-family="Liberation Sans">Lr</text></svg></div>
    <!-- dw -->
    <div class="w-[59px] h-[50px] flex items-center justify-center"><svg width="26" height="27" viewBox="0 0 26 27"><rect x="1" y="1" width="24" height="25" fill="#0a1a02" stroke="#70f000" stroke-width="2"/><text x="2.500" y="19" font-size="14" fill="#70f000" font-family="Liberation Sans">Dw</text></svg></div>
    <!-- acrobat -->
    <div class="w-[59px] h-[50px] flex items-center justify-center"><svg width="26" height="27" viewBox="0 0 26 27"><rect x="1" y="1" width="24" height="25" fill="#2a0606" stroke="#e8211a" stroke-width="2"/><path d="M5 21c3-1 6-6 8-13 0-3-1-3-1-1 0 4 3 9 9 10-5-1-11 0-16 4z" fill="none" stroke="#f2d0d0" stroke-width="1.300"/></svg></div>
    <!-- foxmail-ish -->
    <div class="w-[59px] h-[50px] flex items-center justify-center"><svg width="32" height="36" viewBox="0 0 32 36"><path d="M14 5l14-4 3 12-13 5z" fill="#c9a26a"/><circle cx="13" cy="17" r="11" fill="#cfd2d4" stroke="#888"/><path d="M19 14l6 4-1 6-8-2z" fill="#3da35d"/><text x="8" y="24" font-size="17" font-weight="700" fill="#e8c33b" stroke="#222" stroke-width=".6" font-family="Liberation Serif">I</text><path d="M22 26l6 8" stroke="#555" stroke-width="2.500"/></svg></div>
    <!-- qq -->
    <div class="w-[59px] h-[50px] flex items-center justify-center"><svg width="26" height="34" viewBox="0 0 26 34"><ellipse cx="13" cy="14" rx="9" ry="13" fill="#111"/><ellipse cx="13" cy="23" rx="9" ry="9" fill="#fff"/><ellipse cx="10" cy="9" rx="2" ry="3" fill="#fff"/><ellipse cx="16" cy="9" rx="2" ry="3" fill="#fff"/><path d="M9 13h8l-4 3z" fill="#f8b400"/><path d="M2 16h22v4H2zM17 20h5v7h-5z" fill="#e0201c"/><path d="M6 31h6v3H5zM14 31h6l1 3h-7z" fill="#f8b400"/></svg></div>
    <!-- wechat -->
    <div class="w-[59px] h-[50px] flex items-center justify-center"><svg width="32" height="30" viewBox="0 0 32 30"><ellipse cx="12" cy="11" rx="12" ry="10.500" fill="#2dc100"/><ellipse cx="22" cy="19" rx="9.500" ry="8.500" fill="#f2f2f2"/><circle cx="8" cy="9" r="1.500" fill="#145c00"/><circle cx="16" cy="9" r="1.500" fill="#145c00"/><circle cx="19" cy="17" r="1.200" fill="#888"/><circle cx="25" cy="17" r="1.200" fill="#888"/><path d="M25 25l3 5 0-6z" fill="#f2f2f2"/></svg></div>
    <!-- dingtalk -->
    <div class="w-[59px] h-[50px] flex items-center justify-center"><svg width="30" height="36" viewBox="0 0 30 36"><ellipse cx="15" cy="18" rx="15" ry="18" fill="#2196e8"/><path d="M6 10l17 4-4 5 2 1-8 8 2-6-5-1 2-3-5-2 5 1z" fill="#e8f5ff"/></svg></div>
    <!-- laptop -->
    <div class="w-[59px] h-[50px] flex items-center justify-center"><svg width="28" height="34" viewBox="0 0 28 34"><rect x="3" y="7" width="22" height="20" fill="#8fb8a8"/><rect x="0" y="27" width="28" height="5" rx="1" fill="#66b5a2"/><path d="M11 18l3-10 3 10v9h-6z" fill="#e07a24"/><circle cx="14" cy="6" r="4.500" fill="#efe6d6"/></svg></div>
    <!-- qq music -->
    <div class="w-[59px] h-[50px] flex items-center justify-center"><svg width="30" height="36" viewBox="0 0 30 36"><ellipse cx="15" cy="18" rx="15" ry="18" fill="#ffd800"/><path d="M15 5v21" stroke="#0f9d6f" stroke-width="3"/><path d="M15 5c2 4 8 4 8 10-2-3-5-4-8-4z" fill="#0f9d6f"/><circle cx="11" cy="26" r="5" fill="#0f9d6f"/></svg></div>
    <!-- netease -->
    <div class="w-[59px] h-[50px] flex items-center justify-center"><svg width="30" height="34" viewBox="0 0 30 34"><rect width="30" height="34" rx="6" fill="#e60026"/><circle cx="15" cy="19" r="8" fill="none" stroke="#fff" stroke-width="2.400"/><path d="M19 5c-4 1-8 5-8 12 0 4 4 4 5 2s0-6-1-8" fill="none" stroke="#fff" stroke-width="2.400"/></svg></div>
  </div>

  <!-- tray -->
  <svg class="ml-[10px] shrink-0" width="18" height="10" viewBox="0 0 18 10"><path d="M1 9.500l8-8 8 8" fill="none" stroke="#fff" stroke-width="1.300"/></svg>
  <svg class="ml-[10px] shrink-0" width="22" height="22" viewBox="0 0 32 30"><ellipse cx="12" cy="11" rx="12" ry="10.500" fill="#2dc100"/><ellipse cx="22" cy="19" rx="9.500" ry="8.500" fill="#f2f2f2"/></svg>
  <svg class="ml-[8px] shrink-0" width="18" height="24" viewBox="0 0 26 34"><ellipse cx="13" cy="14" rx="9" ry="13" fill="#111"/><ellipse cx="13" cy="23" rx="9" ry="9" fill="#fff"/><path d="M2 16h22v4H2z" fill="#e0201c"/><path d="M6 31h6v3H5zM14 31h6l1 3h-7z" fill="#f8b400"/></svg>
  <svg class="ml-[12px] shrink-0" width="20" height="20" viewBox="0 0 20 20"><rect x="3" y="6" width="15" height="12" fill="#eee" stroke="#fff"/><path d="M5 1v5M9 1v5" stroke="#fff"/></svg>
  <svg class="ml-[10px] shrink-0" width="20" height="24" viewBox="0 0 20 24" fill="none" stroke="#fff" stroke-width="1.200"><rect x=".7" y=".7" width="18.600" height="16"/><path d="M10 17v5M4 22.500h12M3 4h4v5"/></svg>
  <svg class="ml-[10px] shrink-0" width="22" height="22" viewBox="0 0 22 22" fill="none" stroke="#fff" stroke-width="1.200"><path d="M1 8h4l6-6v18l-6-6H1zM14 7c2 2 2 6 0 8M17 4c3 4 3 10 0 14"/></svg>
  <span class="ml-[8.500px] shrink-0 text-[19px] leading-none text-white">英</span>
  <svg class="ml-[17px] shrink-0" width="20" height="22" viewBox="0 0 20 22"><path d="M2 3l17-3 1 18-18 4z" fill="#ee4723"/><path d="M14 6H7v5h6v5H6" fill="none" stroke="#fff" stroke-width="2.400"/></svg>
  <div class="ml-[19px] shrink-0 w-[78px] text-center text-white whitespace-nowrap text-[16px] leading-[22px] font-['Noto_Sans',sans-serif]"><div class="mb-[3px]">22:25</div><div>2020/11/23</div></div>
  <svg class="ml-[23px] shrink-0" width="20" height="21" viewBox="0 0 20 21"><path d="M1 1h18v15h-6l-3 4-3-4H1z" fill="none" stroke="#fff" stroke-width="1.300"/></svg>
  <div class="ml-auto mr-[5px] w-px h-[50px] bg-[#8a6a80]"></div>
</footer>

<script>
  // rulers: doc origin is at x=447, y=349 (one ruler cell = 50 doc px at 100%)
  var top_html = '';
  for (var k = -8; k <= 31; k++) {
    top_html += '<div class="w-[50px] shrink-0 h-full flex overflow-hidden border-l border-[#6c6c6c] bg-[repeating-linear-gradient(90deg,transparent_0_9px,#7a7a7a_9px_10px)] bg-[length:100%_3px] bg-bottom bg-no-repeat"><span class="h-full min-w-[29px] pl-[2px] bg-[#2c2c2c]">' + Math.abs(k * 50) + '</span></div>';
  }
  var rulerTop = document.getElementById('ruler-top');
  rulerTop.innerHTML = '<div class="flex -ml-[25px]">' + top_html + '</div><div class="absolute left-[1642px] top-0 w-px h-full bg-[#ddd]"></div>';

  var left_html = '';
  for (var j = -5; j <= 20; j++) {
    var digits = String(Math.abs(j * 50)).split('').map(function (d) { return '<div>' + d + '</div>'; }).join('');
    left_html += '<div class="h-[50px] shrink-0 flex overflow-hidden border-t border-[#6c6c6c] bg-[repeating-linear-gradient(180deg,transparent_0_9px,#7a7a7a_9px_10px)] bg-[length:4px_100%] bg-right bg-no-repeat"><div class="w-[17px] h-full pl-[3px] pt-[2px] bg-[#2c2c2c]">' + digits + '</div></div>';
  }
  var rulerLeft = document.getElementById('ruler-left');
  rulerLeft.innerHTML = '<div class="-mt-[33px]">' + left_html + '</div><div class="absolute left-[1px] top-[564px] w-[11px] h-px bg-white"></div>';
</script>
</body>
</html>
